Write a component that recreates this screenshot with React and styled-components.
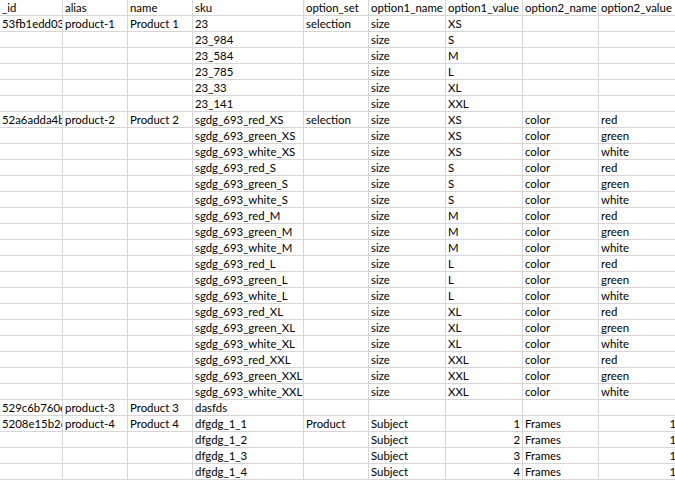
import React from 'react';
import styled, { createGlobalStyle } from 'styled-components';

const Global = createGlobalStyle`
  body { margin: 0; background: #fff; }
`;

const widths = [63, 65, 65, 111, 65, 77, 77, 76, 80];

const Sheet = styled.div`
  display: grid;
  grid-template-columns: ${widths.map((w) => w + 'px').join(' ')};
  grid-auto-rows: 16px;
  width: 675px;
  overflow: hidden;
  font-family: Lato, 'Liberation Sans', sans-serif;
  font-size: 11.4px;
  color: #000;
`;

const Cell = styled.div`
  border-right: 1px solid #d6d6d6;
  border-bottom: 1px solid #d6d6d6;
  padding: 0 2px;
  line-height: 16px;
  white-space: nowrap;
  overflow: hidden;
  text-align: ${(p) => (p.$num ? 'right' : 'left')};
`;

const header = ['_id', 'alias', 'name', 'sku', 'option_set', 'option1_name', 'option1_value', 'option2_name', 'option2_value'];

const rows = [];
const p1 = ['XS', 'S', 'M', 'L', 'XL', 'XXL'];
const p1sku = ['23', '23_984', '23_584', '23_785', '23_33', '23_141'];
p1.forEach((s, i) =>
  rows.push(i === 0
    ? ['53fb1edd036e', 'product-1', 'Product 1', p1sku[i], 'selection', 'size', s, '', '']
    : ['', '', '', p1sku[i], '', 'size', s, '', ''])
);
let first = true;
p1.forEach((s) =>
  ['red', 'green', 'white'].forEach((c) => {
    rows.push([
      first ? '52a6adda4b5' : '', first ? 'product-2' : '', first ? 'Product 2' : '',
      `sgdg_693_${c}_${s}`, first ? 'selection' : '', 'size', s, 'color', c,
    ]);
    first = false;
  })
);
rows.push(['529c6b760ee', 'product-3', 'Product 3', 'dasfds', '', '', '', '', '']);
[1, 2, 3, 4].forEach((n) =>
  rows.push([
    n === 1 ? '5208e15b2cc' : '', n === 1 ? 'product-4' : '', n === 1 ? 'Product 4' : '',
    `dfgdg_1_${n}`, n === 1 ? 'Product' : '', 'Subject', { num: n }, 'Frames', { num: 1 },
  ])
);

export default function App() {
  return (
    <>
      <Global />
      <Sheet>
        {header.map((h) => <Cell key={h}>{h}</Cell>)}
        {rows.map((r, i) =>
          r.map((v, j) =>
            typeof v === 'object'
              ? <Cell key={i + '-' + j} $num>{v.num}</Cell>
              : <Cell key={i + '-' + j}>{v}</Cell>
          )
        )}
      </Sheet>
    </>
  );
}
